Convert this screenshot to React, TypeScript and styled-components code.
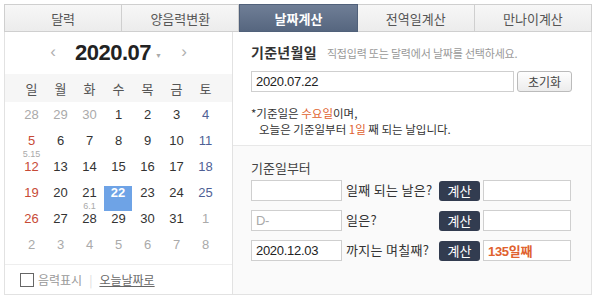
import React from "react"
import styled, { createGlobalStyle } from "styled-components"

const GlobalStyle = createGlobalStyle`
  html, body {
    margin: 0;
    padding: 0;
    background: #fff;
  }
  body {
    font-family: "Liberation Sans", "Noto Sans CJK KR", sans-serif;
    color: #333;
  }
`

const Page = styled.div`
  padding: 4px 4px 0 4px;
  width: 588px;
`

const TabBar = styled.div`
  display: flex;
  height: 28px;
`

const Tab = styled.div<{ $active?: boolean }>`
  flex: 1;
  display: flex;
  align-items: center;
  justify-content: center;
  box-sizing: border-box;
  font-family: "Noto Sans CJK KR", sans-serif;
  font-size: 13px;
  color: ${(p) => (p.$active ? "#fff" : "#555")};
  font-weight: ${(p) => (p.$active ? 700 : 400)};
  background: ${(p) =>
    p.$active
      ? "linear-gradient(#6f7e96, #56667f)"
      : "linear-gradient(#f7f7f7, #ececec)"};
  border: 1px solid ${(p) => (p.$active ? "#51617a" : "#cfcfcf")};
  border-left: ${(p) => (p.$active ? "1px solid #51617a" : "none")};
  &:first-child {
    border-left: 1px solid #cfcfcf;
  }
`

const Body = styled.div`
  display: flex;
  height: 263px;
  box-sizing: border-box;
  border: 1px solid #e2e2e2;
  border-top: none;
`

const Calendar = styled.div`
  width: 227px;
  flex: none;
  display: flex;
  flex-direction: column;
  border-right: 1px solid #e2e2e2;
`

const CalHeader = styled.div`
  height: 42px;
  display: flex;
  align-items: center;
  justify-content: center;
`

const Arrow = styled.span`
  color: #b0b0b0;
  font-size: 17px;
  width: 20px;
  text-align: center;
  margin-top: -2px;
`

const Title = styled.div`
  font-size: 22px;
  font-weight: 700;
  color: #222;
  letter-spacing: -0.5px;
  margin: 0 4px 0 12px;
`

const Caret = styled.span`
  color: #aaa;
  font-size: 7px;
  margin-right: 12px;
  margin-top: 4px;
`

const WeekRow = styled.div`
  height: 28px;
  background: #f6f6f6;
  display: grid;
  grid-template-columns: repeat(7, 29px);
  padding: 0 12px;
  align-items: center;
`

const WeekDay = styled.div`
  text-align: center;
  font-family: "Noto Sans CJK KR", sans-serif;
  font-size: 13px;
  color: #555;
`

const DayGrid = styled.div`
  display: grid;
  grid-template-columns: repeat(7, 29px);
  grid-auto-rows: 26px;
  padding: 6px 12px 0 12px;
`

type Tone = "normal" | "sun" | "sat" | "muted"

const toneColor: Record<Tone, string> = {
  normal: "#333",
  sun: "#c74a36",
  sat: "#4f5f95",
  muted: "#aaa",
}

const DayCell = styled.div<{ $tone: Tone; $selected?: boolean }>`
  text-align: center;
  font-size: 13px;
  line-height: 14px;
  color: ${(p) => (p.$selected ? "#fff" : toneColor[p.$tone])};
  font-weight: ${(p) => (p.$selected ? 700 : 400)};
  background: ${(p) => (p.$selected ? "#6ea3e6" : "transparent")};
  margin: ${(p) => (p.$selected ? "0 1px 1px 0" : "0")};
`

const Lunar = styled.div`
  font-size: 9px;
  line-height: 12px;
  color: #aaa;
  font-weight: 400;
`

const CalFooter = styled.div`
  margin-top: auto;
  height: 29px;
  border-top: 1px solid #eee;
  display: flex;
  align-items: center;
  padding-left: 15px;
  font-family: "Noto Sans CJK KR", sans-serif;
  font-size: 12px;
`

const CheckBox = styled.span`
  width: 12px;
  height: 12px;
  border: 1px solid #666;
  margin-right: 4px;
`

const FooterLabel = styled.span`
  color: #999;
`

const Divider = styled.span`
  color: #ddd;
  margin: 0 7px;
`

const FooterLink = styled.span`
  color: #666;
  text-decoration: underline;
`

const Right = styled.div`
  flex: 1;
  display: flex;
  flex-direction: column;
`

const TopSection = styled.div`
  height: 114px;
  box-sizing: border-box;
  border-bottom: 1px solid #e8e8e8;
  padding: 10px 18px 0 18px;
  font-family: "Noto Sans CJK KR", sans-serif;
`

const HeadLine = styled.div`
  display: flex;
  align-items: baseline;
  height: 22px;
`

const HeadTitle = styled.span`
  font-size: 14px;
  font-weight: 700;
  color: #333;
  letter-spacing: 0.3px;
  margin-right: 10px;
`

const HeadHint = styled.span`
  font-size: 11px;
  color: #999;
  letter-spacing: -0.2px;
`

const InputRow = styled.div`
  display: flex;
  gap: 3px;
  margin-top: 7px;
`

const TextBox = styled.div<{ $width: number; $placeholder?: boolean; $accent?: boolean }>`
  width: ${(p) => p.$width}px;
  height: 21px;
  box-sizing: border-box;
  border: 1px solid #cfcfcf;
  background: #fff;
  display: flex;
  align-items: center;
  padding-left: 4px;
  font-family: "Liberation Sans", "Noto Sans CJK KR", sans-serif;
  font-size: 13px;
  color: ${(p) => (p.$accent ? "#e0612e" : p.$placeholder ? "#aaa" : "#222")};
  font-weight: ${(p) => (p.$accent ? 700 : 400)};
  letter-spacing: -0.3px;
`

const ResetButton = styled.div`
  width: 55px;
  height: 21px;
  box-sizing: border-box;
  border: 1px solid #bbb;
  border-radius: 3px;
  background: linear-gradient(#fefefe, #ececec);
  display: flex;
  align-items: center;
  justify-content: center;
  font-size: 12px;
  color: #444;
`

const Notes = styled.div`
  margin-top: 13px;
  font-size: 11.5px;
  line-height: 16px;
  color: #333;
`

const NoteLine = styled.div<{ $indent?: boolean }>`
  padding-left: ${(p) => (p.$indent ? "8px" : "0")};
`

const Accent = styled.span`
  color: #e0612e;
`

const BottomSection = styled.div`
  flex: 1;
  background: #fafafa;
  padding: 12px 18px 0 18px;
  font-family: "Noto Sans CJK KR", sans-serif;
`

const SubTitle = styled.div`
  font-size: 13px;
  color: #444;
  height: 22px;
`

const CalcRows = styled.div`
  display: flex;
  flex-direction: column;
  gap: 9px;
`

const CalcRow = styled.div`
  display: flex;
  align-items: center;
`

const CalcLabel = styled.span`
  width: 97px;
  padding-left: 4px;
  box-sizing: border-box;
  font-size: 13px;
  color: #333;
  letter-spacing: 0.3px;
  margin-top: -3px;
`

const CalcButton = styled.div`
  width: 41px;
  height: 20px;
  border-radius: 3px;
  background: #323c50;
  color: #fff;
  font-size: 13px;
  display: flex;
  align-items: center;
  justify-content: center;
  margin-right: 3px;
`

type Day = { d: number; tone: Tone; lunar?: string; selected?: boolean }

const buildDays = (): Day[] => {
  const days: Day[] = []
  ;[28, 29, 30].forEach((d) => days.push({ d, tone: "muted" }))
  for (let d = 1; d <= 31; d++) {
    const idx = days.length % 7
    const tone: Tone = idx === 0 ? "sun" : idx === 6 ? "sat" : "normal"
    const day: Day = { d, tone }
    if (d === 5) day.lunar = "5.15"
    if (d === 21) day.lunar = "6.1"
    if (d === 22) day.selected = true
    days.push(day)
  }
  let n = 1
  while (days.length < 42) days.push({ d: n++, tone: "muted" })
  return days
}

const weekDays = ["일", "월", "화", "수", "목", "금", "토"]
const tabs = ["달력", "양음력변환", "날짜계산", "전역일계산", "만나이계산"]

export default function App() {
  const days = buildDays()
  return (
    <>
      <GlobalStyle />
      <Page>
        <TabBar>
          {tabs.map((t) => (
            <Tab key={t} $active={t === "날짜계산"}>
              {t}
            </Tab>
          ))}
        </TabBar>
        <Body>
          <Calendar>
            <CalHeader>
              <Arrow>‹</Arrow>
              <Title>2020.07</Title>
              <Caret>▼</Caret>
              <Arrow>›</Arrow>
            </CalHeader>
            <WeekRow>
              {weekDays.map((w) => (
                <WeekDay key={w}>{w}</WeekDay>
              ))}
            </WeekRow>
            <DayGrid>
              {days.map((day, i) => (
                <DayCell key={i} $tone={day.tone} $selected={day.selected}>
                  {day.d}
                  {day.lunar && <Lunar>{day.lunar}</Lunar>}
                </DayCell>
              ))}
            </DayGrid>
            <CalFooter>
              <CheckBox />
              <FooterLabel>음력표시</FooterLabel>
              <Divider>|</Divider>
              <FooterLink>오늘날짜로</FooterLink>
            </CalFooter>
          </Calendar>
          <Right>
            <TopSection>
              <HeadLine>
                <HeadTitle>기준년월일</HeadTitle>
                <HeadHint>직접입력 또는 달력에서 날짜를 선택하세요.</HeadHint>
              </HeadLine>
              <InputRow>
                <TextBox $width={263}>2020.07.22</TextBox>
                <ResetButton>초기화</ResetButton>
              </InputRow>
              <Notes>
                <NoteLine>
                  *기준일은 <Accent>수요일</Accent>이며,
                </NoteLine>
                <NoteLine $indent>
                  오늘은 기준일부터 <Accent>1일</Accent> 째 되는 날입니다.
                </NoteLine>
              </Notes>
            </TopSection>
            <BottomSection>
              <SubTitle>기준일부터</SubTitle>
              <CalcRows>
                <CalcRow>
                  <TextBox $width={91} />
                  <CalcLabel>일째 되는 날은?</CalcLabel>
                  <CalcButton>계산</CalcButton>
                  <TextBox $width={88} />
                </CalcRow>
                <CalcRow>
                  <TextBox $width={91} $placeholder>
                    D-
                  </TextBox>
                  <CalcLabel>일은?</CalcLabel>
                  <CalcButton>계산</CalcButton>
                  <TextBox $width={88} />
                </CalcRow>
                <CalcRow>
                  <TextBox $width={91}>2020.12.03</TextBox>
                  <CalcLabel>까지는 며칠째?</CalcLabel>
                  <CalcButton>계산</CalcButton>
                  <TextBox $width={88} $accent>
                    135일째
                  </TextBox>
                </CalcRow>
              </CalcRows>
            </BottomSection>
          </Right>
        </Body>
      </Page>
    </>
  )
}
